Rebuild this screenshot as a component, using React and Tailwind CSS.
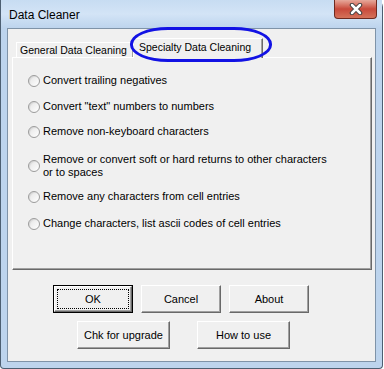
import { useState } from "react";

const options = [
  { label: "Convert trailing negatives", mt: "mt-0" },
  { label: 'Convert "text" numbers to numbers', mt: "mt-[13px]" },
  { label: "Remove non-keyboard characters", mt: "mt-[12px]" },
  {
    label: (
      <>
        Remove or convert soft or hard returns to other characters
        <br />
        or to spaces
      </>
    ),
    mt: "mt-[15px]",
  },
  { label: "Remove any characters from cell entries", mt: "mt-[11px]" },
  { label: "Change characters, list ascii codes of cell entries", mt: "mt-[14px]" },
];

const Radio = ({ checked }) => (
  <span className="w-[12px] h-[12px] shrink-0 rounded-full border border-[#9c9c9c] bg-gradient-to-br from-[#e4e4e4] to-white flex items-center justify-center shadow-[inset_1px_1px_1px_rgba(0,0,0,0.08)]">
    {checked && <span className="w-[4px] h-[4px] rounded-full bg-[#1c3a75]" />}
  </span>
);

const Button = ({ children, width, focused }) => (
  <div
    className={`${width} h-[28px] ${
      focused ? "border border-black" : ""
    } flex`}
  >
    <button className="relative flex-1 bg-[#f0f0f0] border border-t-white border-l-white border-r-[#696969] border-b-[#696969] shadow-[inset_-1px_-1px_0_#a0a0a0] text-[11px] text-black leading-none flex items-center justify-center">
      {focused && (
        <span className="absolute inset-[2px] border border-dotted border-black" />
      )}
      {children}
    </button>
  </div>
);

const App = () => {
  const [selected, setSelected] = useState(-1);

  return (
    <div className="w-[384px] h-[369px] bg-white font-['Liberation_Sans',Arial,sans-serif] text-black">
      <div className="w-[383px] h-[369px] border border-t-0 border-[#4d5f72] rounded-tr-[7px] rounded-b-[4px] bg-[#bdd4ed] flex flex-col px-[6px] pb-[6px]">
        {/* title bar */}
        <div className="h-[28px] flex justify-between bg-gradient-to-b from-[#c7dcf2] via-[#d3e4f6] to-[#bdd4ed] -mx-[6px] px-[6px]">
          <span className="ml-[2px] mt-[8px] text-[12px] leading-[14px] text-black">
            Data Cleaner
          </span>
          <div className="w-[43px] h-[19px] mr-[-1px] rounded-b-[4px] border border-t-0 border-[#6e2a20] bg-gradient-to-b from-[#e6a89b] via-[#c8493b] to-[#d4725a] flex items-center justify-center">
            <svg width="16" height="12" viewBox="0 0 16 12">
              <path
                d="M4 2 L12 10 M12 2 L4 10"
                stroke="#3c3c3c"
                strokeWidth="4.5"
                strokeLinecap="round"
              />
              <path
                d="M4 2 L12 10 M12 2 L4 10"
                stroke="#ffffff"
                strokeWidth="2.5"
                strokeLinecap="round"
              />
            </svg>
          </div>
        </div>

        {/* client area */}
        <div className="flex-1 border border-[#7f93a8] bg-[#f0f0f0] flex flex-col pl-[4px] pr-[3px]">
          {/* tab strip */}
          <div className="relative mt-[9px] h-[19px] flex items-end pl-[4px]">
            <div className="w-[117px] h-[15px] border border-b-0 border-t-white border-l-white border-r-[#a0a0a0] flex items-center pl-[3px] text-[10.5px] leading-none whitespace-nowrap">
              General Data Cleaning
            </div>
            <div className="relative z-10 -mb-px w-[130px] h-[20px] bg-[#f0f0f0] border border-b-0 border-t-white border-l-white border-r-[#696969] shadow-[inset_-1px_0_0_#a0a0a0] flex items-center pl-[5px] pb-[2px] text-[10.5px] leading-none whitespace-nowrap">
              Specialty Data Cleaning
            </div>
            <div className="absolute left-[118px] top-[-11px] w-[142px] h-[35px] border-[3px] border-[#1212e4] rounded-[38px/17px] z-20" />
          </div>

          {/* tab panel */}
          <div className="h-[213px] w-[360px] border border-t-white border-l-white border-r-[#696969] border-b-[#696969] shadow-[inset_-1px_-1px_0_#a0a0a0] flex flex-col pt-[16px] pl-[15px]">
            {options.map((o, i) => (
              <label
                key={i}
                onClick={() => setSelected(i)}
                className={`${o.mt} flex items-center gap-[3px] text-[11px] leading-[13px] cursor-default`}
              >
                <Radio checked={selected === i} />
                <span>{o.label}</span>
              </label>
            ))}
          </div>

          {/* buttons */}
          <div className="mt-[15px] flex gap-[8px] pl-[41px]">
            <Button width="w-[80px]" focused>
              OK
            </Button>
            <Button width="w-[80px]">Cancel</Button>
            <Button width="w-[80px]">About</Button>
          </div>
          <div className="mt-[8px] flex gap-[27px] pl-[65px]">
            <Button width="w-[93px]">Chk for upgrade</Button>
            <Button width="w-[93px]">How to use</Button>
          </div>
        </div>
      </div>
    </div>
  );
};

export default App;
